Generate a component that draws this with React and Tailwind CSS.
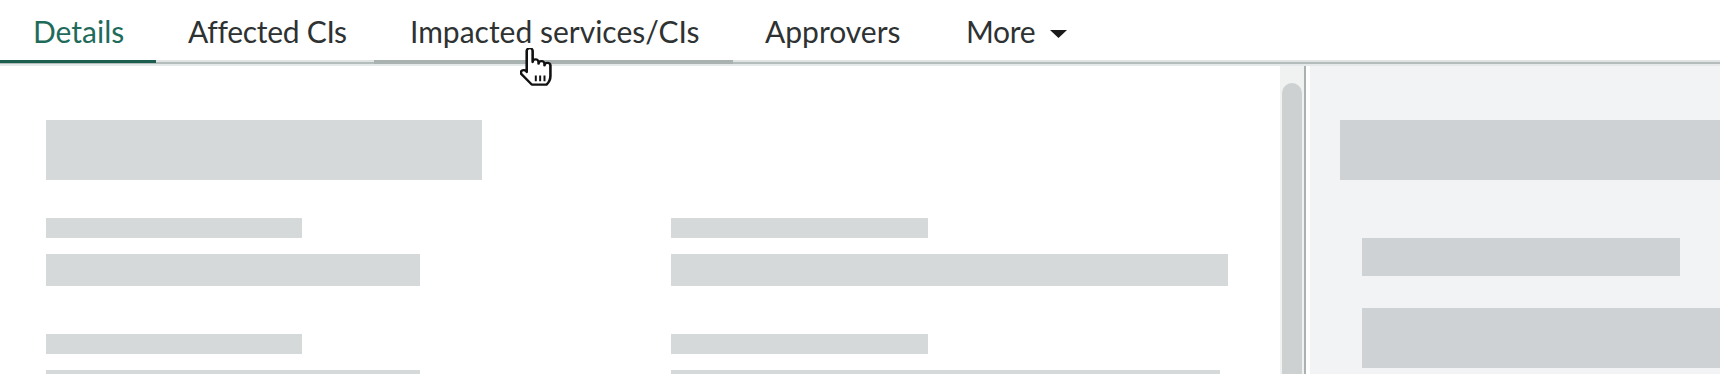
import React from "react";

const tabs = [
  { label: "Details", cls: "w-[156px] pl-[33px] text-[#1f6b5b]", state: "active" },
  { label: "Affected CIs", cls: "w-[218px] pl-[32px] text-[#2e3232] tracking-[-0.3px]", state: "normal" },
  { label: "Impacted services/CIs", cls: "w-[359px] pl-[36px] text-[#2e3232]", state: "hover" },
  { label: "Approvers", cls: "w-[199px] pl-[32px] text-[#2e3232]", state: "normal" },
  { label: "More", cls: "w-[166px] pl-[34px] text-[#2e3232] tracking-[-0.3px]", state: "normal", caret: true },
];

function Line({ state }) {
  if (state === "active") {
    return (
      <div className="flex flex-col">
        <div className="h-[3px] bg-[#1b5e4f]" />
        <div className="h-[1px] bg-[#b3bbbb]" />
        <div className="h-[2px] bg-[#e6e9e9]" />
      </div>
    );
  }
  if (state === "hover") {
    return (
      <div className="flex flex-col">
        <div className="h-[4px] bg-[#a9b1b1]" />
        <div className="h-[2px] bg-[#e6e9e9]" />
      </div>
    );
  }
  return (
    <div className="flex flex-col">
      <div className="h-[2px] bg-[#dfe3e3]" />
      <div className="h-[2px] bg-[#b3bbbb]" />
      <div className="h-[2px] bg-[#e6e9e9]" />
    </div>
  );
}

function Tab({ t }) {
  return (
    <div className="flex flex-col shrink-0">
      <div className={"h-[60px] pt-[13px] flex items-start text-[30px] leading-[36px] whitespace-nowrap " + t.cls}>
        <span>{t.label}</span>
        {t.caret && (
          <svg className="ml-[15px] mt-[17px]" width="17" height="8" viewBox="0 0 17 8">
            <path d="M0 0H17L8.5 8Z" fill="#1a1a1a" />
          </svg>
        )}
      </div>
      <Line state={t.state} />
    </div>
  );
}

function HandCursor() {
  return (
    <svg
      className="absolute left-[520px] top-[48px]"
      width="32"
      height="38"
      viewBox="1.6 1 16.2 22.2"
      preserveAspectRatio="none"
    >
      <path
        d="M5 2.6a1.5 1.5 0 0 1 3 0V9.2a1.5 1.5 0 0 1 3 0V10.2a1.5 1.5 0 0 1 3 0V11.2a1.5 1.5 0 0 1 3 0V17.4q0 3 -2 5H7.6L2.4 16.3a1.45 1.45 0 0 1 2.2 -1.9L5 15Z"
        fill="#ffffff"
        stroke="#111111"
        strokeWidth="1.3"
        strokeLinejoin="round"
      />
      <path d="M9.6 17v3.4M11.8 17v3.4M14 17v3.4" stroke="#111111" strokeWidth="1" />
    </svg>
  );
}

export default function App() {
  return (
    <div className="relative w-[1720px] h-[374px] overflow-hidden bg-white font-['Lato',sans-serif]">
      <div className="flex h-[66px]">
        {tabs.map((t) => (
          <Tab key={t.label} t={t} />
        ))}
        <div className="flex-1 flex flex-col justify-end">
          <Line state="normal" />
        </div>
      </div>

      <div className="flex h-[308px]">
        <div className="w-[1280px] shrink-0 bg-white pt-[54px] pl-[46px]">
          <div className="h-[60px] w-[436px] bg-[#d5d9d9]" />
          <div className="mt-[38px] flex">
            <div className="w-[625px] flex flex-col">
              <div className="h-[20px] w-[256px] bg-[#d5d9d9]" />
              <div className="mt-[16px] h-[32px] w-[374px] bg-[#d5d9d9]" />
              <div className="mt-[48px] h-[20px] w-[256px] bg-[#d5d9d9]" />
              <div className="mt-[16px] h-[32px] w-[374px] bg-[#d5d9d9]" />
            </div>
            <div className="flex flex-col">
              <div className="h-[20px] w-[257px] bg-[#d5d9d9]" />
              <div className="mt-[16px] h-[32px] w-[557px] bg-[#d5d9d9]" />
              <div className="mt-[48px] h-[20px] w-[257px] bg-[#d5d9d9]" />
              <div className="mt-[16px] h-[32px] w-[549px] bg-[#d5d9d9]" />
            </div>
          </div>
        </div>

        <div className="w-[24px] shrink-0 bg-[#f0f1f1] pt-[17px] px-[2px]">
          <div className="h-full rounded-t-[10px] bg-[#cdd1d1]" />
        </div>
        <div className="w-[2px] shrink-0 bg-[#a9b1b1]" />
        <div className="w-[4px] shrink-0 bg-white" />

        <div className="flex-1 bg-[#f2f3f5] pt-[54px] pl-[30px]">
          <div className="h-[60px] w-full bg-[#cfd2d5]" />
          <div className="pl-[22px]">
            <div className="mt-[58px] h-[38px] w-[318px] bg-[#cfd2d5]" />
            <div className="mt-[32px] h-[60px] w-full bg-[#cfd2d5]" />
          </div>
        </div>
      </div>

      <HandCursor />
    </div>
  );
}
